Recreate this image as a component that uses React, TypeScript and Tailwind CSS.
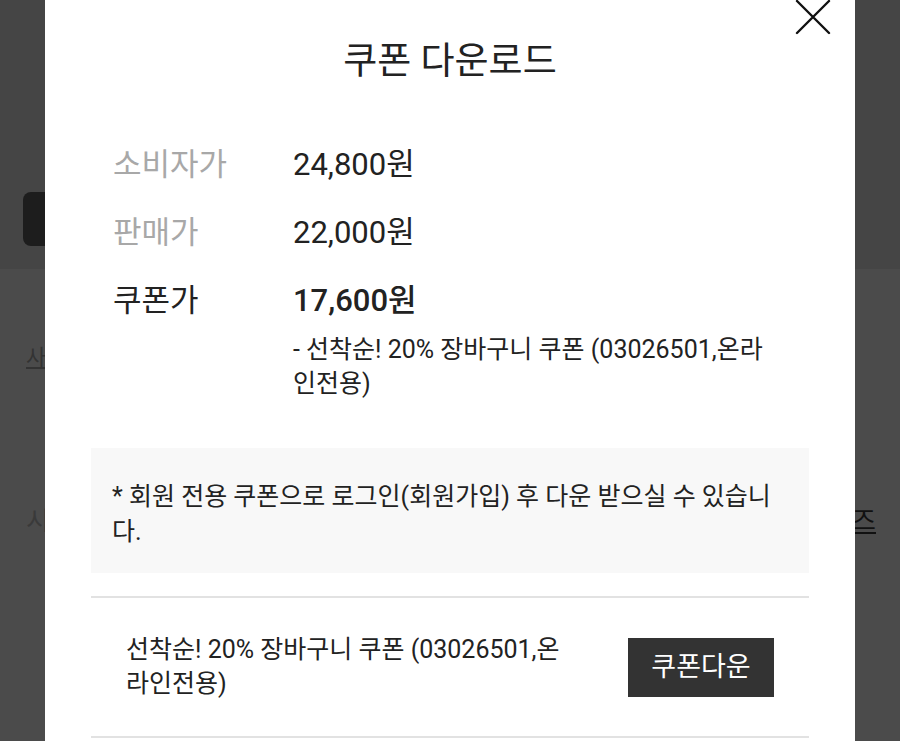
import React from "react";

const font = { fontFamily: 'Roboto, "Noto Sans CJK KR", sans-serif' };

function CloseIcon() {
  return (
    <svg width="36" height="36" viewBox="0 0 36 36" fill="none">
      <path d="M2 2 L34 34 M34 2 L2 34" stroke="#111" strokeWidth="2.4" strokeLinecap="round" />
    </svg>
  );
}

function PriceRow({ label, value, strong }: { label: string; value: string; strong?: boolean }) {
  return (
    <div className="flex h-[40px] items-center">
      <div className={`w-[180px] text-[31px] ${strong ? "text-[#222]" : "text-[#a8a8a8]"}`}>{label}</div>
      <div className={`text-[31px] text-[#222] ${strong ? "font-medium" : ""}`}>{value}</div>
    </div>
  );
}

export default function App() {
  return (
    <div className="relative h-[741px] w-[900px] overflow-hidden bg-[#4b4b4b]" style={font}>
      {/* dimmed page behind the modal */}
      <div className="h-[269px] bg-[#454545] pl-[23px] pt-[192px]">
        <div className="h-[54px] w-[200px] rounded-lg bg-[#1d1d1d]" />
      </div>
      <div className="pl-[26px] pt-[72px] text-[22px] text-[#333] underline">사이즈</div>
      <div className="mt-[128px] flex justify-between pl-[26px] pr-[24px] text-[26px]">
        <span className="text-[#3a3a3a]">시</span>
        <span className="text-[#111] underline">사이즈</span>
      </div>

      {/* modal */}
      <div className="absolute left-[45px] top-0 h-full w-[810px] bg-white">
        <button className="absolute right-[24px] top-[-1px]">
          <CloseIcon />
        </button>

        <h2 className="pt-[42px] text-center text-[37px] leading-[40px] text-[#222]">쿠폰 다운로드</h2>

        <div className="px-[46px]">
          <div className="mt-[63px] flex flex-col gap-[28px] px-[22px]">
            <PriceRow label="소비자가" value="24,800원" />
            <PriceRow label="판매가" value="22,000원" />
            <PriceRow label="쿠폰가" value="17,600원" strong />
          </div>
          <div className="mt-[12px] pl-[202px] pr-[34px] text-[25px] leading-[34px] text-[#222]">
            - 선착순! 20% 장바구니 쿠폰 (03026501,온라인전용)
          </div>

          <div className="mt-[47px] bg-[#f8f8f8] px-[21px] pb-[24px] pt-[31px] text-[25px] leading-[35px] text-[#222]">
            * 회원 전용 쿠폰으로 로그인(회원가입) 후 다운 받으실 수 있습니다.
          </div>

          <div className="mt-[23px] border-t-2 border-[#e2e2e2]" />
          <div className="flex h-[138px] items-center justify-between px-[35px]">
            <div className="w-[440px] text-[25px] leading-[34px] text-[#222]">
              선착순! 20% 장바구니 쿠폰 (03026501,온라인전용)
            </div>
            <button className="flex h-[59px] w-[146px] items-center justify-center bg-[#333] text-[27px] text-white">
              쿠폰다운
            </button>
          </div>
          <div className="border-t-2 border-[#e2e2e2]" />
        </div>
      </div>
    </div>
  );
}
